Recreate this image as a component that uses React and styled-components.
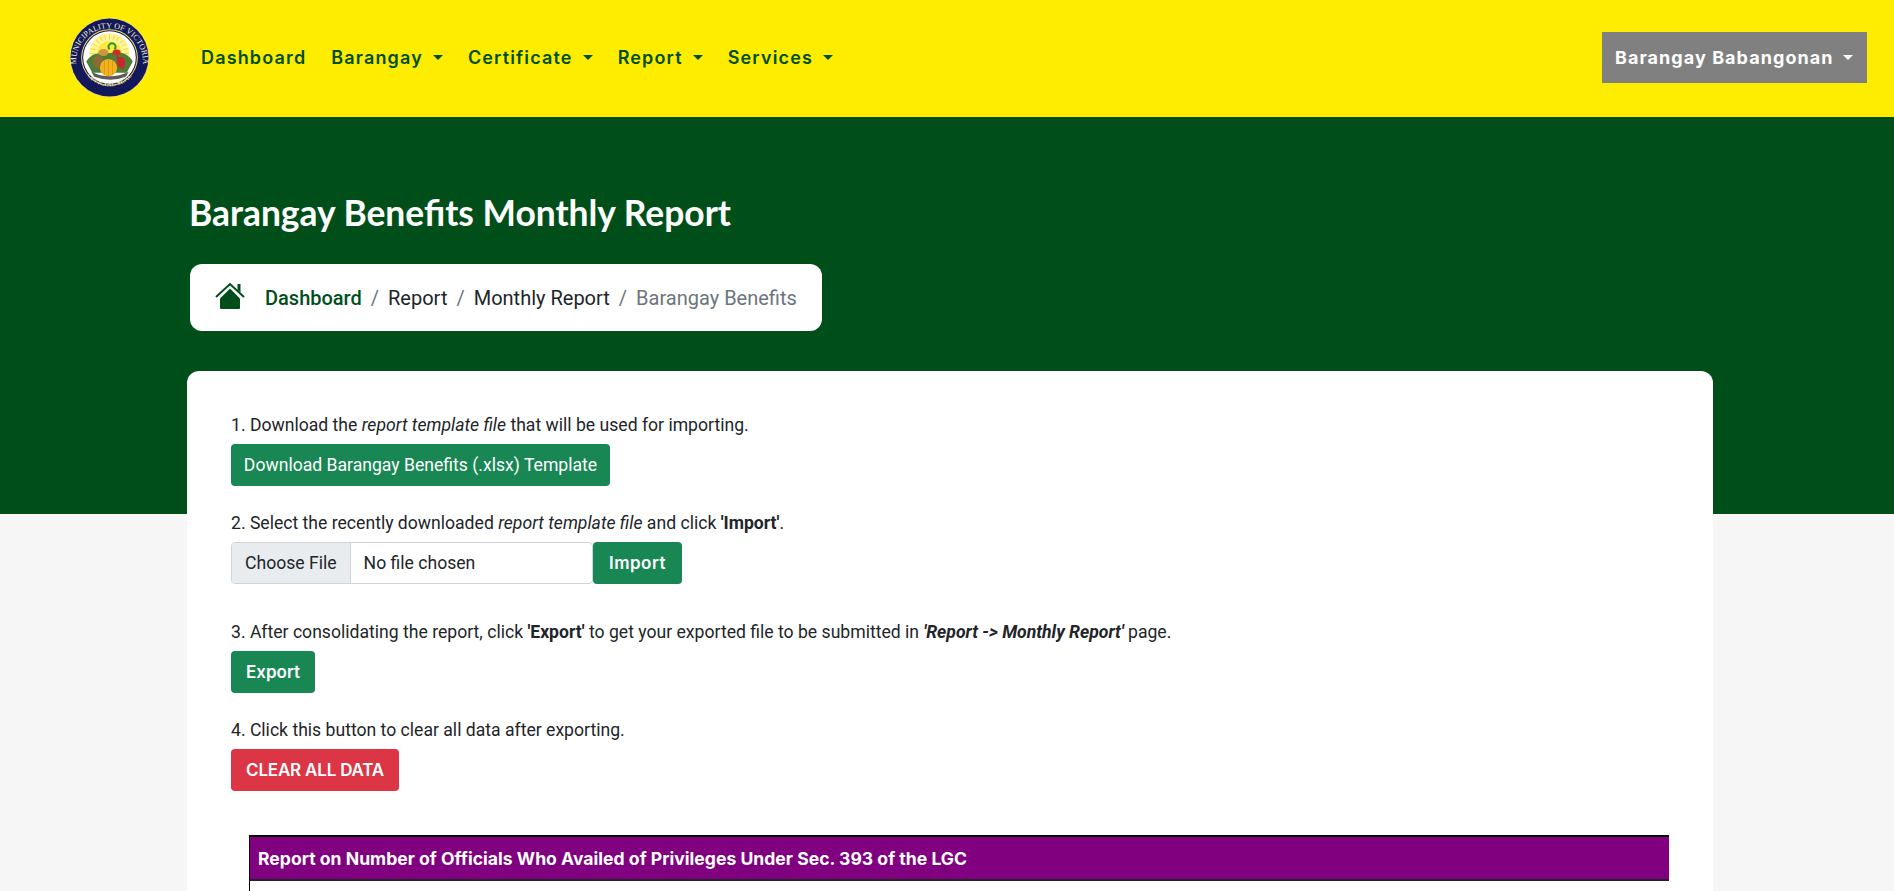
import styled, { createGlobalStyle } from "styled-components";

const GlobalStyle = createGlobalStyle`
  html, body {
    margin: 0;
    padding: 0;
    height: 891px;
    overflow: hidden;
    background-color: #f6f6f6;
    font-family: "Roboto", sans-serif;
    font-size: 17.6px;
    color: #212529;
  }
`;

const Navbar = styled.header`
  display: flex;
  align-items: center;
  height: 117px;
  padding: 0 27px 2px 69px;
  box-sizing: border-box;
  background-color: #ffed00;
`;

const Seal = styled.svg`
  width: 81px;
  height: 81px;
  flex-shrink: 0;
  margin-right: 51px;
`;

const NavList = styled.nav`
  display: flex;
  align-items: center;
  gap: 25px;
  flex: 1;
`;

const NavItem = styled.a`
  display: flex;
  align-items: center;
  font-family: "Inter", sans-serif;
  font-size: 18px;
  font-weight: 600;
  letter-spacing: 1.15px;
  color: #004f1b;
`;

const Caret = styled.span`
  display: inline-block;
  margin-left: 10px;
  border-top: 5px solid currentColor;
  border-left: 5px solid transparent;
  border-right: 5px solid transparent;
`;

const UserButton = styled.button`
  display: flex;
  align-items: center;
  height: 51px;
  width: 265px;
  padding: 0 13px;
  border: none;
  background-color: #808080;
  color: #ffffff;
  font-family: "Inter", sans-serif;
  font-size: 18px;
  font-weight: 700;
  letter-spacing: 1.05px;
`;

const Hero = styled.section`
  height: 397px;
  padding: 75px 0 0 190px;
  box-sizing: border-box;
  background-color: #004f1b;
`;

const Title = styled.h1`
  margin: 0 0 30px -1px;
  font-family: "Lato", sans-serif;
  font-size: 35.4px;
  font-weight: 700;
  line-height: 42px;
  color: #ffffff;
`;

const Breadcrumb = styled.ol`
  display: inline-flex;
  align-items: center;
  height: 67px;
  margin: 0;
  padding: 0 25px;
  box-sizing: border-box;
  list-style: none;
  border-radius: 12px;
  background-color: #ffffff;
  font-size: 20px;
`;

const HomeIcon = styled.svg`
  width: 30px;
  height: 30px;
  margin-right: 20px;
  margin-top: -4px;
`;

const Crumb = styled.li`
  color: ${(p) => (p.$active ? "#6c757d" : "#212529")};
  font-weight: ${(p) => (p.$strong ? 500 : 400)};
  ${(p) => p.$strong && "color: #004f1b;"}
  ${(p) =>
    !p.$first &&
    `&::before {
      content: "/";
      padding: 0 9px;
      color: #6c757d;
      font-weight: 400;
    }`}
`;

const Card = styled.main`
  width: 1526px;
  height: 600px;
  margin: -143px 0 0 187px;
  padding: 41px 44px 0;
  box-sizing: border-box;
  border-radius: 12px;
  background-color: #ffffff;
`;

const Step = styled.p`
  margin: 0 0 6px;
  line-height: 26px;
`;

const Action = styled.div`
  display: flex;
  margin-bottom: ${(p) => p.$gap}px;
`;

const Button = styled.button`
  width: ${(p) => p.$width}px;
  height: 42px;
  padding: 0;
  border: none;
  border-radius: 4px;
  background-color: ${(p) => (p.$danger ? "#dc3545" : "#198754")};
  color: #ffffff;
  font-family: ${(p) => (p.$bold ? '"Inter", sans-serif' : '"Roboto", sans-serif')};
  font-size: ${(p) => (p.$bold ? 17 : 17.6)}px;
  font-weight: ${(p) => (p.$bold ? 600 : 400)};
  letter-spacing: ${(p) => p.$track || 0}px;
`;

const FileField = styled.div`
  display: flex;
  align-items: center;
  width: 362px;
  height: 42px;
  box-sizing: border-box;
  border: 1px solid #ced4da;
  border-radius: 4px;
  overflow: hidden;
`;

const FileChoose = styled.span`
  display: flex;
  align-items: center;
  height: 100%;
  padding: 0 13px;
  margin-right: 13px;
  border-right: 1px solid #ced4da;
  background-color: #e9ecef;
`;

const ReportTable = styled.div`
  width: 1420px;
  margin: 44px 0 0 18px;
`;

const TableHead = styled.div`
  display: flex;
  align-items: center;
  height: 46px;
  padding: 0 8px;
  box-sizing: border-box;
  border-top: 2px solid #000000;
  border-left: 1px solid #000000;
  border-bottom: 2px solid #212529;
  background-color: #800080;
  color: #ffffff;
  font-family: "Inter", sans-serif;
  font-size: 17.6px;
  font-weight: 700;
`;

const TableBody = styled.div`
  height: 40px;
  border-left: 1px solid #000000;
`;

function SealLogo() {
  const rays = Array.from({ length: 24 }, (_, i) => (i * 360) / 24);
  return (
    <Seal viewBox="0 0 80 80">
      <circle cx="40" cy="40" r="39.5" fill="#f2df5a" />
      <circle cx="40" cy="40" r="38.5" fill="#12185a" />
      <circle cx="40" cy="40" r="28" fill="#f2df5a" />
      <circle cx="40" cy="40" r="27" fill="#12185a" />
      <circle cx="40" cy="40" r="26" fill="#ffffff" />
      <defs>
        <path id="sealTop" d="M7 44a33 33 0 1 1 66 0" />
        <path id="sealBottom" d="M13 50a29 29 0 0 0 54 0" />
      </defs>
      <text fontFamily="Liberation Serif, serif" fontSize="8" fill="#f4f0d0">
        <textPath href="#sealTop" startOffset="50%" textAnchor="middle">MUNICIPALITY OF VICTORIA</textPath>
      </text>
      <text fontFamily="Liberation Serif, serif" fontSize="7" fill="#f4f0d0">
        <textPath href="#sealBottom" startOffset="50%" textAnchor="middle">OFFICIAL SEAL</textPath>
      </text>
      <circle cx="40" cy="36" r="20" fill="#fff59a" />
      <circle cx="40" cy="36" r="12" fill="#ffe93a" />
      {rays.map((a) => (
        <line key={a} x1="40" y1="22" x2="40" y2="17" stroke="#f5dc3c" strokeWidth="1" transform={`rotate(${a} 40 36)`} />
      ))}
      <path d="M40 32a3.5 3.5 0 1 1 5 0" fill="none" stroke="#239a3c" strokeWidth="2" />
      <path d="M17 44q6-9 15-8l16-1q10 0 15 9l-6 11H23z" fill="#4f7d36" />
      <ellipse cx="34" cy="35" rx="5" ry="3.5" fill="#d0953f" />
      <ellipse cx="47" cy="35" rx="4" ry="3" fill="#cf2f2a" />
      <ellipse cx="29" cy="44" rx="5" ry="6.5" fill="#8c6a34" />
      <ellipse cx="39" cy="50" rx="8.5" ry="8.5" fill="#f4b21d" />
      <path d="M35 43v14M39 42v16M43 43v14" stroke="#d98f12" strokeWidth="0.8" />
      <path d="M47 39l7 1q3 6-1 12l-5-4z" fill="#c9252c" />
      <path d="M22 54q18 9 37 0l-3 5q-15 6-31 0z" fill="#5b5b5b" />
    </Seal>
  );
}

export default function App() {
  return (
    <>
      <GlobalStyle />
      <Navbar>
        <SealLogo />
        <NavList>
          <NavItem>Dashboard</NavItem>
          <NavItem>Barangay<Caret /></NavItem>
          <NavItem>Certificate<Caret /></NavItem>
          <NavItem>Report<Caret /></NavItem>
          <NavItem>Services<Caret /></NavItem>
        </NavList>
        <UserButton>Barangay Babangonan<Caret /></UserButton>
      </Navbar>
      <Hero>
        <Title>Barangay Benefits Monthly Report</Title>
        <Breadcrumb>
          <HomeIcon viewBox="0 0 30 30">
            <path d="M1 16L15 3l14 13" fill="none" stroke="#004f1b" strokeWidth="2" />
            <path d="M22.5 3h3v8.5l-3-2.8z" fill="#004f1b" />
            <path d="M5 17.5L15 7.5l10 10V27a1 1 0 0 1-1 1H6a1 1 0 0 1-1-1z" fill="#004f1b" />
          </HomeIcon>
          <Crumb $first $strong>Dashboard</Crumb>
          <Crumb>Report</Crumb>
          <Crumb>Monthly Report</Crumb>
          <Crumb $active>Barangay Benefits</Crumb>
        </Breadcrumb>
      </Hero>
      <Card>
        <Step>1. Download the <em>report template file</em> that will be used for importing.</Step>
        <Action $gap={24}>
          <Button $width={379}>Download Barangay Benefits (.xlsx) Template</Button>
        </Action>
        <Step>2. Select the recently downloaded <em>report template file</em> and click <strong>'Import'</strong>.</Step>
        <Action $gap={35}>
          <FileField>
            <FileChoose>Choose File</FileChoose>
            No file chosen
          </FileField>
          <Button $bold $width={89} $track={0.5}>Import</Button>
        </Action>
        <Step>3. After consolidating the report, click <strong>'Export'</strong> to get your exported file to be submitted in <strong><em>'Report -&gt; Monthly Report'</em></strong> page.</Step>
        <Action $gap={24}>
          <Button $bold $width={84}>Export</Button>
        </Action>
        <Step>4. Click this button to clear all data after exporting.</Step>
        <Action $gap={0}>
          <Button $bold $danger $width={168} $track={-0.2}>CLEAR ALL DATA</Button>
        </Action>
        <ReportTable>
          <TableHead>Report on Number of Officials Who Availed of Privileges Under Sec. 393 of the LGC</TableHead>
          <TableBody />
        </ReportTable>
      </Card>
    </>
  );
}
